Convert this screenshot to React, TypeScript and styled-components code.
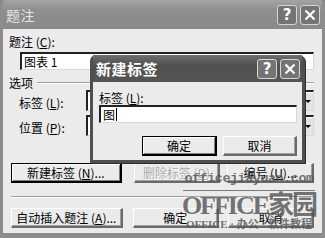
import React from "react";
import styled, { createGlobalStyle } from "styled-components";

const Global = createGlobalStyle`
  html, body { margin: 0; padding: 0; background: #8a8a8a; }
  body { font-family: "Noto Sans CJK SC", "DejaVu Sans", sans-serif; font-size: 12px; line-height: 14px; color: #000; }
  * { box-sizing: border-box; }
`;

const Window = styled.div`
  position: relative;
  width: 325px;
  height: 238px;
  background: #8d8d8d;
  border-radius: 6px 6px 0 0;
  display: flex;
  flex-direction: column;
  padding: 0 3px 5px 3px;
  overflow: hidden;
`;

const TitleBar = styled.div<{ $h: number; $dark?: boolean }>`
  height: ${(p) => p.$h}px;
  flex: none;
  display: flex;
  align-items: center;
  padding: 0 2px 0 3px;
  background: ${(p) =>
    p.$dark
      ? "linear-gradient(#6e6e6e, #4f4f4f 40%, #555 100%)"
      : "linear-gradient(#a4a4a4, #8e8e8e 35%, #8a8a8a 100%)"};
`;

const Title = styled.div<{ $bold?: boolean; $size: number }>`
  flex: 1;
  color: ${(p) => (p.$bold ? "#fff" : "#e6e6e6")};
  font-weight: ${(p) => (p.$bold ? 700 : 400)};
  font-size: ${(p) => p.$size}px;
  line-height: 18px;
  letter-spacing: 0.5px;
`;

const CapBtn = styled.div`
  width: 20px;
  height: 20px;
  margin-left: 3px;
  border: 1px solid #d6d6d6;
  border-radius: 3px;
  background: #747474;
  display: flex;
  align-items: center;
  justify-content: center;
  color: #fff;
  font-family: "DejaVu Sans", sans-serif;
  font-weight: 700;
  font-size: 15px;
  line-height: 18px;
`;

const Body = styled.div`
  flex: 1;
  background: #ebebeb;
  padding: 6px 8px 0 5px;
  display: flex;
  flex-direction: column;
`;

const Label = styled.div<{ $indent?: number }>`
  height: 13px;
  line-height: 13px;
  padding-left: ${(p) => p.$indent ?? 0}px;
  white-space: nowrap;
`;

const TextBox = styled.div<{ $w?: string; $ml?: number; $mt?: number }>`
  margin-left: ${(p) => p.$ml ?? 0}px;
  margin-top: ${(p) => p.$mt ?? 0}px;
  width: ${(p) => p.$w ?? "auto"};
  height: 18px;
  flex: none;
  background: #fff;
  border-top: 2px solid #222;
  border-left: 2px solid #222;
  border-right: 1px solid #d8d8d8;
  border-bottom: 1px solid #d8d8d8;
  padding-left: 2px;
  line-height: 14px;
  display: flex;
  align-items: center;
`;

const Caret = styled.span`
  display: inline-block;
  width: 1px;
  height: 13px;
  background: #000;
  margin-left: 1px;
`;

const GroupHead = styled.div`
  display: flex;
  align-items: center;
  margin-top: 6px;
  gap: 4px;
  height: 13px;
  flex: none;
`;

const GroupLine = styled.div`
  flex: 1;
  height: 2px;
  border-top: 1px solid #a0a0a0;
  border-bottom: 1px solid #fff;
  margin-top: 1px;
`;

const FieldRow = styled.div<{ $mt: number }>`
  display: flex;
  align-items: center;
  flex: none;
  margin-top: ${(p) => p.$mt}px;
  padding-left: 11px;
`;

const FieldLabel = styled.div`
  width: 67px;
  white-space: nowrap;
  line-height: 13px;
  padding-top: 3px;
`;

const Combo = styled.div`
  flex: 1;
  height: 21px;
  background: #fff;
  border-top: 2px solid #222;
  border-left: 2px solid #222;
  border-right: 1px solid #d8d8d8;
  border-bottom: 1px solid #d8d8d8;
  display: flex;
  align-items: center;
  padding-left: 2px;
`;

const ComboText = styled.div`
  flex: 1;
`;

const ComboArrow = styled.div`
  width: 10px;
  height: 17px;
  background: #e4e4e4;
  display: flex;
  align-items: center;
  justify-content: center;
  &::after {
    content: "";
    border-left: 3px solid transparent;
    border-right: 3px solid transparent;
    border-top: 3px solid #000;
  }
`;

const ButtonRow = styled.div<{ $mt: number }>`
  display: flex;
  flex: none;
  margin-top: ${(p) => p.$mt}px;
`;

const Button = styled.div<{ $w: number; $ml?: number; $default?: boolean; $disabled?: boolean }>`
  width: ${(p) => p.$w}px;
  height: 20px;
  margin-left: ${(p) => p.$ml ?? 0}px;
  background: #ebebeb;
  display: flex;
  align-items: center;
  justify-content: center;
  white-space: nowrap;
  line-height: 14px;
  color: ${(p) => (p.$disabled ? "#a8a8a8" : "#000")};
  text-shadow: ${(p) => (p.$disabled ? "1px 1px 0 #fff" : "none")};
  border-top: 1px solid ${(p) => (p.$default ? "#000" : "#fff")};
  border-left: 1px solid ${(p) => (p.$default ? "#000" : "#fff")};
  border-right: ${(p) => (p.$default ? "2px solid #000" : "2px solid #6a6a6a")};
  border-bottom: ${(p) => (p.$default ? "2px solid #000" : "2px solid #6a6a6a")};
  box-shadow: ${(p) => (p.$default ? "inset 1px 1px 0 #fff, inset -1px -1px 0 #808080" : "inset -1px -1px 0 #a0a0a0")};
`;

const Separator = styled.div`
  margin: 13px 0 0 3px;
  height: 2px;
  flex: none;
  border-top: 1px solid #a0a0a0;
  border-bottom: 1px solid #fff;
`;

const Popup = styled.div`
  position: absolute;
  left: 90px;
  top: 55px;
  width: 215px;
  height: 108px;
  background: #4f4f4f;
  border-radius: 6px 6px 0 0;
  padding: 0 3px 3px 3px;
  display: flex;
  flex-direction: column;
  box-shadow: 1px 1px 0 #2e2e2e;
`;

const PopupBody = styled.div`
  flex: 1;
  background: #ebebeb;
  padding: 9px 5px 0 6px;
  display: flex;
  flex-direction: column;
`;

const Watermark = styled.div`
  position: absolute;
  left: 179px;
  top: 171px;
  width: 140px;
  display: flex;
  flex-direction: column;
  align-items: center;
  color: rgba(85, 85, 85, 0.82);
  pointer-events: none;
  white-space: nowrap;
`;

const WmSite = styled.div`
  font-family: "Liberation Mono", monospace;
  font-weight: 700;
  font-size: 13.5px;
  line-height: 16px;
  letter-spacing: -0.5px;
`;

const WmRule = styled.div`
  width: 132px;
  height: 1px;
  background: rgba(85, 85, 85, 0.75);
  margin-top: 3px;
`;

const WmBig = styled.div`
  font-family: "Liberation Serif", "Noto Sans CJK SC", serif;
  font-weight: 700;
  font-size: 26px;
  line-height: 25px;
  letter-spacing: -2px;
  margin-top: 2px;
`;

const WmSmall = styled.div`
  font-family: "Liberation Serif", "Noto Sans CJK SC", serif;
  font-weight: 700;
  font-size: 11px;
  line-height: 12px;
  letter-spacing: 0;
`;

const U = styled.span`
  text-decoration: underline;
`;

const Close = () => (
  <svg width="12" height="12" viewBox="0 0 12 12">
    <path d="M1.5 1.5 L10.5 10.5 M10.5 1.5 L1.5 10.5" stroke="#fff" strokeWidth="2.2" />
  </svg>
);

export default function App() {
  return (
    <>
      <Global />
      <Window>
        <TitleBar $h={29}>
          <Title $size={14}>题注</Title>
          <CapBtn>?</CapBtn>
          <CapBtn>
            <Close />
          </CapBtn>
        </TitleBar>
        <Body>
          <Label $indent={1}>
            题注 (<U>C</U>):
          </Label>
          <TextBox $ml={12} $mt={4}>图表 1</TextBox>
          <GroupHead>
            <Label $indent={1}>选项</Label>
            <GroupLine />
          </GroupHead>
          <FieldRow $mt={1}>
            <FieldLabel>
              标签 (<U>L</U>):
            </FieldLabel>
            <Combo>
              <ComboText>图表</ComboText>
              <ComboArrow />
            </Combo>
          </FieldRow>
          <FieldRow $mt={4}>
            <FieldLabel>
              位置 (<U>P</U>):
            </FieldLabel>
            <Combo>
              <ComboText>所选项目下方</ComboText>
              <ComboArrow />
            </Combo>
          </FieldRow>
          <ButtonRow $mt={27}>
            <Button $w={111} $ml={3} $default>
              新建标签 (<U>N</U>)...
            </Button>
            <Button $w={87} $ml={12} $disabled>
              删除标签 (<U>D</U>)
            </Button>
            <Button $w={87} $ml={7}>
              编号 (<U>U</U>)...
            </Button>
          </ButtonRow>
          <Separator />
          <ButtonRow $mt={10}>
            <Button $w={113} $ml={3}>
              自动插入题注 (<U>A</U>)...
            </Button>
            <Button $w={87} $ml={10}>
              确定
            </Button>
            <Button $w={87} $ml={9}>
              取消
            </Button>
          </ButtonRow>
        </Body>

        <Popup>
          <TitleBar $h={27} $dark>
            <Title $bold $size={15}>新建标签</Title>
            <CapBtn>?</CapBtn>
            <CapBtn>
              <Close />
            </CapBtn>
          </TitleBar>
          <PopupBody>
            <Label>
              标签 (<U>L</U>):
            </Label>
            <TextBox $mt={1} $w="198px">
              图<Caret />
            </TextBox>
            <ButtonRow $mt={13}>
              <Button $w={75} $ml={43} $default>
                确定
              </Button>
              <Button $w={74} $ml={6}>
                取消
              </Button>
            </ButtonRow>
          </PopupBody>
        </Popup>

        <Watermark>
          <WmSite>officejiayuan.com</WmSite>
          <WmRule />
          <WmBig>OFFICE家园</WmBig>
          <WmSmall>OFFICE · 办公 · 软件教程</WmSmall>
        </Watermark>
      </Window>
    </>
  );
}
